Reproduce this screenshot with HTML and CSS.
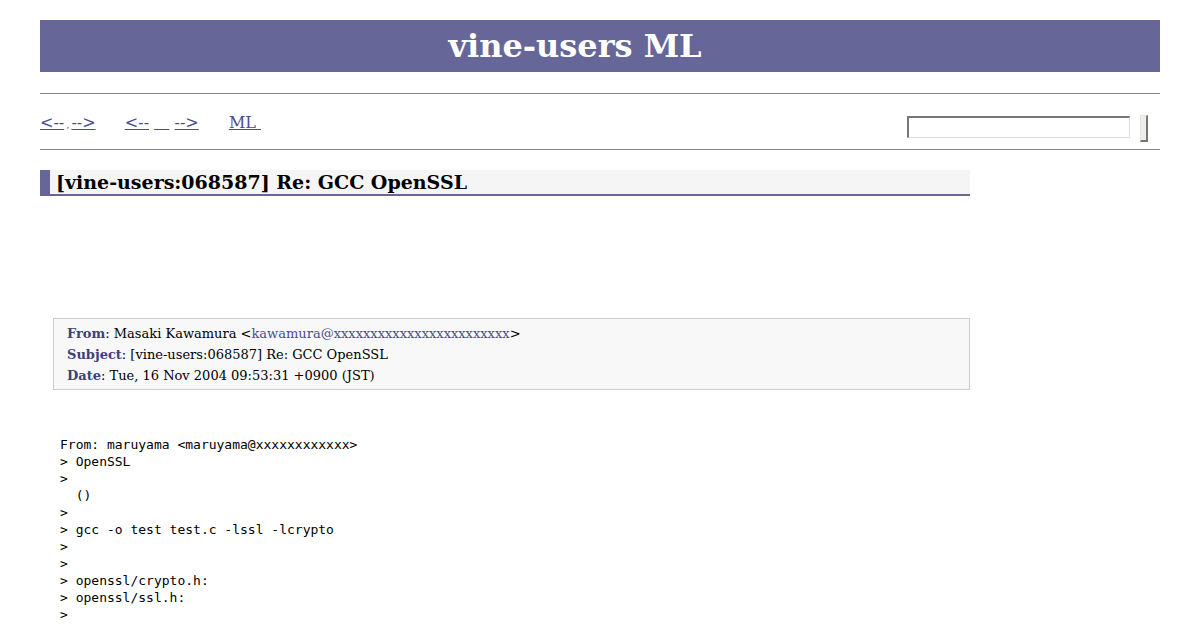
FILE: index.html
```html
<html>
  <head>
    <title>[vine-users:068587] Re: GCC OpenSSL</title>
    <meta charset="utf-8">
    <link rel="stylesheet" href="styles.css">
  </head>
  <body>
    <div class="banner">
      <h1>vine-users ML</h1>
    </div>

    <hr class="rule">

    <div class="nav">
      <div class="nav__links">
        <a href="#">&lt;--</a><span class="sep">,</span><a href="#">--&gt;</a>
        <span class="gap"></span>
        <a href="#">&lt;--</a> <a href="#">&nbsp;&nbsp;&nbsp;</a> <a href="#">--&gt;</a>
        <span class="gap gap--wide"></span>
        <a href="#">ML&nbsp;</a>
      </div>
      <form class="search">
        <input type="text" class="search__box">
        <button type="button" class="search__btn"></button>
      </form>
    </div>

    <hr class="rule rule--tight">

    <h2 class="subject">[vine-users:068587] Re: GCC OpenSSL</h2>

    <div class="ad"></div>

    <div class="headers">
      <div><span class="label">From</span>: Masaki Kawamura &lt;<a href="#">kawamura@xxxxxxxxxxxxxxxxxxxxxxxx</a>&gt;</div>
      <div><span class="label">Subject</span>: [vine-users:068587] Re: GCC OpenSSL</div>
      <div><span class="label">Date</span>: Tue, 16 Nov 2004 09:53:31 +0900 (JST)</div>
    </div>

    <pre class="body">From: maruyama &lt;maruyama@xxxxxxxxxxxx&gt;
&gt; OpenSSL
&gt;
  ()
&gt;
&gt; gcc -o test test.c -lssl -lcrypto
&gt;
&gt;
&gt; openssl/crypto.h:
&gt; openssl/ssl.h:
&gt;
</pre>
  </body>
</html>
```

FILE: styles.css
```css
body {
  margin: 20px 40px;
  background: #ffffff;
  color: #000000;
  font-family: "DejaVu Serif", serif;
  font-size: 16px;
}

a {
  color: #4b4b8c;
}

.banner {
  background: #666699;
  height: 52px;
  display: flex;
  align-items: center;
  justify-content: center;
}
.banner h1 {
  margin: 0 50px 0 0;
  color: #ffffff;
  font-size: 32px;
  font-weight: bold;
}

.rule {
  margin: 21px 0 0;
  border: 0;
  border-top: 1px solid #888888;
  height: 0;
}
.rule--tight {
  margin-top: 0;
}

.nav {
  display: flex;
  justify-content: space-between;
  align-items: flex-start;
  height: 55px;
}
.nav__links {
  padding-top: 19px;
  font-size: 16px;
}
.nav__links .sep {
  font-size: 10px;
  color: #4b4b8c;
  margin: 0 2px;
}
.nav__links .gap {
  display: inline-block;
  width: 19px;
}
.nav__links .gap--wide {
  width: 20px;
}

.search {
  margin: 21px 12px 0 0;
  display: flex;
  align-items: flex-start;
  gap: 10px;
}
.search__box {
  width: 223px;
  height: 22px;
  margin: 1px 0 0;
  padding: 0;
  border: 1px solid #dddddd;
  border-top: 2px solid #777777;
  border-left: 2px solid #777777;
  background: #ffffff;
}
.search__btn {
  width: 8px;
  height: 27px;
  margin: 0;
  padding: 0;
  border: 1px solid #e4e2dc;
  border-right: 2px solid #777777;
  border-bottom: 2px solid #777777;
  background: #efedea;
}

.subject {
  width: 914px;
  margin: 20px 0 0;
  padding: 2px 0 2px 6px;
  border-left: 10px solid #666699;
  border-bottom: 2px solid #666699;
  background: #f5f5f5;
  font-size: 19px;
  line-height: 20px;
}

.ad {
  height: 122px;
}

.headers {
  width: 902px;
  margin-left: 13px;
  padding: 4px 0 3px 13px;
  border: 1px solid #cccccc;
  background: #f8f8f8;
  font-size: 13px;
  line-height: 21px;
}
.headers .label {
  font-weight: bold;
  color: #3f3f7a;
}
.headers a {
  text-decoration: none;
  color: #4b4b99;
}

.body {
  margin: 46px 0 0 20px;
  font-family: "DejaVu Sans Mono", monospace;
  font-size: 13px;
  line-height: 17px;
}
```
